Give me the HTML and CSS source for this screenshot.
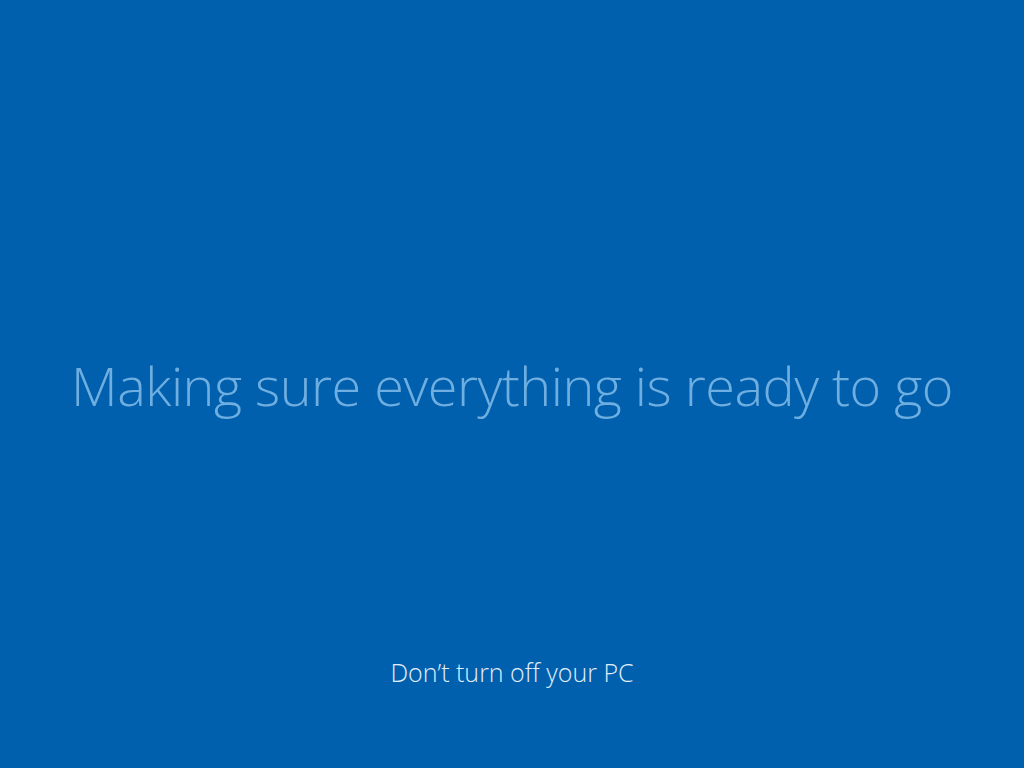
FILE: index.html
```html
<!DOCTYPE html>
<html lang="en">
<head>
  <meta charset="UTF-8">
  <title>Making sure everything is ready to go</title>
  <link rel="stylesheet" href="styles.css">
</head>
<body>
  <div class="setup-screen">
    <div class="setup-main">
      <h1 class="setup-title">Making sure everything is ready to go</h1>
    </div>
    <div class="setup-footer">Don’t turn off your PC</div>
  </div>
</body>
</html>
```
FILE: styles.css
```css
html, body {
  margin: 0;
  padding: 0;
  height: 100%;
  overflow: hidden;
}

body {
  background: #0060ad;
  font-family: "Open Sans", "Noto Sans", sans-serif;
  font-weight: 300;
}

.setup-screen {
  height: 100vh;
  display: flex;
  flex-direction: column;
}

.setup-main {
  flex: 1;
  display: flex;
  align-items: center;
  justify-content: center;
  padding-top: 115px;
}

.setup-title {
  margin: 0;
  font-size: 54px;
  font-weight: 300;
  letter-spacing: -0.5px;
  color: #6eaee0;
  white-space: nowrap;
}

.setup-footer {
  height: 113px;
  text-align: center;
  font-size: 25px;
  color: #e2eef8;
}
```
